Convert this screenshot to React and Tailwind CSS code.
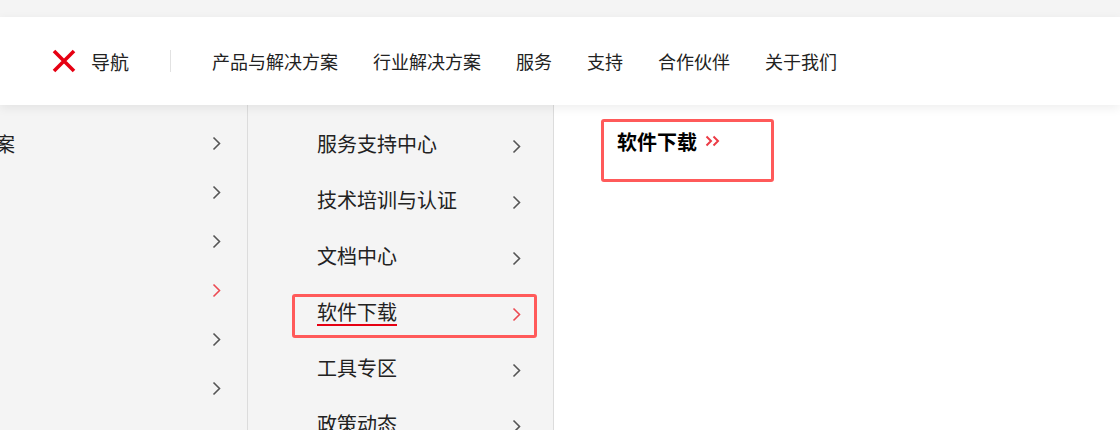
import React from "react";

const topNav = ["产品与解决方案", "行业解决方案", "服务", "支持", "合作伙伴", "关于我们"];
const supportItems = ["服务支持中心", "技术培训与认证", "文档中心", "软件下载", "工具专区", "政策动态"];

const Chevron = ({ active, className = "" }) => (
  <svg width="9" height="15" viewBox="0 0 9 15" fill="none" className={className}>
    <path d="M1.5 1.5 L7.5 7.5 L1.5 13.5" stroke={active ? "#ec4a52" : "#555"} strokeWidth="1.6" />
  </svg>
);

const App = () => {
  return (
    <div className="w-[1120px] h-[430px] overflow-hidden bg-[#f4f4f4] text-[#222]" style={{ fontFamily: '"Noto Sans CJK SC", "Noto Sans", sans-serif' }}>
      <div className="h-[17px]" />
      <header className="relative z-10 h-[88px] bg-white flex items-center pl-[52px] shadow-[0_3px_10px_rgba(0,0,0,0.07)]">
        <svg width="24" height="24" viewBox="0 0 24 24">
          <path d="M2 2 L22 22 M22 2 L2 22" stroke="#e60012" strokeWidth="3.6" />
        </svg>
        <span className="ml-[15px] text-[19px] leading-none">导航</span>
        <div className="ml-[41px] w-px h-[22px] bg-[#e2e2e2]" />
        <nav className="ml-[41px] flex gap-[35px] text-[18px] leading-none">
          {topNav.map((t) => (
            <a key={t}>{t}</a>
          ))}
        </nav>
      </header>

      <div className="flex h-[325px]">
        {/* level 1 */}
        <div className="w-[248px] shrink-0 overflow-hidden border-r border-[#dcdcdc] pt-[14px]">
          {topNav.map((t, i) => (
            <div key={t} className="h-[49px] flex items-center justify-between pr-[26px]">
              <span className="-ml-[125px] text-[20px] leading-[24px] text-[#222] whitespace-nowrap">{t}</span>
              <Chevron active={i === 3} />
            </div>
          ))}
        </div>

        {/* level 2 */}
        <div className="w-[306px] shrink-0 border-r border-[#dcdcdc] pt-[11px]">
          {supportItems.map((t, i) => (
            <div key={t} className="relative h-[56px] flex items-center justify-between pl-[69px] pr-[32px]">
              <span className={`text-[20px] leading-[24px] ${i === 3 ? "border-b-2 border-[#e60012] mt-[2px]" : ""}`}>{t}</span>
              <Chevron active={i === 3} className="mt-[4px]" />
              {i === 3 && (
                <div className="absolute left-[44px] right-[16px] top-[10px] bottom-[2px] border-[3px] border-[#ff5a5a] rounded-[3px]" />
              )}
            </div>
          ))}
        </div>

        {/* level 3 */}
        <div className="relative flex-1 bg-white pl-[63px] pt-[25px]">
          <div className="flex items-center gap-[8px]">
            <span className="text-[20px] leading-[24px] font-bold text-black">软件下载</span>
            <svg width="16" height="12" viewBox="0 0 16 12" fill="none" className="-mt-[3px]">
              <path d="M1.5 1.5 L6 6 L1.5 10.5 M8.5 1.5 L13 6 L8.5 10.5" stroke="#ec3c46" strokeWidth="2" />
            </svg>
          </div>
          <div className="absolute left-[47px] top-[14px] w-[173px] h-[63px] border-[3px] border-[#ff5a5a] rounded-[3px]" />
        </div>
      </div>
    </div>
  );
};

export default App;
